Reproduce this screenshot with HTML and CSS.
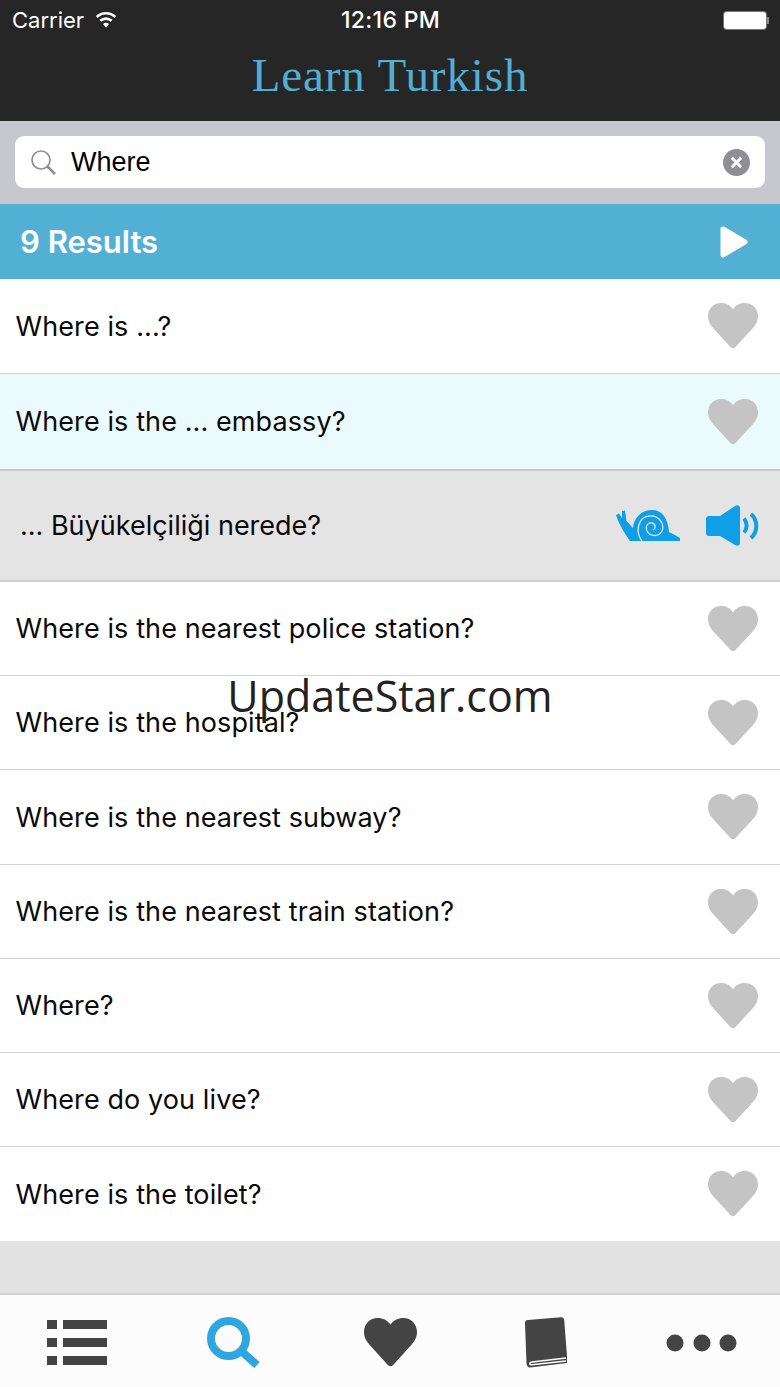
FILE: index.html
```html
<!DOCTYPE html>
<html lang="en">
<head>
  <meta charset="UTF-8">
  <title>Learn Turkish</title>
  <meta name="viewport" content="width=device-width, initial-scale=1">
  <link rel="stylesheet" href="styles.css">
</head>
<body>
  <svg class="defs" width="0" height="0">
    <symbol id="heart" viewBox="0 0 50 48" preserveAspectRatio="none">
      <path d="M25 6.500 C22 2 17.500 0 13 0 C5.500 0 0 6 0 14 C0 19 2.500 23 5 26 L22.500 46 C24 47.700 26 47.700 27.500 46 L45 26 C47.500 23 50 19 50 14 C50 6 44.500 0 37 0 C32.500 0 28 2 25 6.500 Z"/>
    </symbol>
  </svg>

  <header class="topbar">
    <div class="status">
      <div class="status-left">
        <span>Carrier</span>
        <svg class="wifi" width="24" height="17" viewBox="0 0 24 17">
          <path d="M12 16.500 L9 13 A4.500 4.500 0 0 1 15 13 Z" fill="#fff"/>
          <path d="M6.300 9.800 A8.500 8.500 0 0 1 17.700 9.800 M2.700 6 A13.500 13.500 0 0 1 21.300 6" fill="none" stroke="#fff" stroke-width="2.600"/>
        </svg>
      </div>
      <div class="status-time">12:16 PM</div>
      <div class="battery"><div class="battery-body"></div><div class="battery-tip"></div></div>
    </div>
    <h1 class="title">Learn Turkish</h1>
  </header>

  <div class="searchbar">
    <div class="field">
      <svg class="lens" width="27" height="27" viewBox="0 0 27 27">
        <circle cx="11" cy="11" r="9" fill="none" stroke="#8e8e93" stroke-width="1.700"/>
        <path d="M17.500 17.500 L25 25" stroke="#8e8e93" stroke-width="2.600"/>
      </svg>
      <span class="query">Where</span>
      <svg class="clear" width="27" height="27" viewBox="0 0 27 27">
        <circle cx="13.500" cy="13.500" r="13.500" fill="#8e8e93"/>
        <path d="M8.800 8.800 L18.200 18.200 M18.200 8.800 L8.800 18.200" stroke="#fff" stroke-width="3"/>
      </svg>
    </div>
  </div>

  <div class="results">
    <span>9 Results</span>
    <svg width="28" height="32" viewBox="0 0 28 32">
      <path d="M3 3 L25 16 L3 29 Z" fill="#fff" stroke="#fff" stroke-width="5" stroke-linejoin="round"/>
    </svg>
  </div>

  <ul class="list">
    <li class="row row-first">Where is ...?<svg class="heart"><use href="#heart"/></svg></li>
    <li class="row row-open">Where is the ... embassy?<svg class="heart"><use href="#heart"/></svg></li>
    <li class="detail">
      <span>... Büyükelçiliği nerede?</span>
      <div class="detail-icons">
        <svg width="64" height="31" viewBox="0 0 64 31">
          <path fill="#0f9fe6" d="M0 5 L3 3.500 L6 8 L6 1 L9 0.500 L10.500 11 L17 18 C18 7 26 0 36 0 C46 0 52 8 53 22 L58 24.500 L64 28 L64 31 L14 31 C9 24 3 14 0 5 Z"/>
          <path fill="none" stroke="#e4e4e4" stroke-width="1.300" d="M26 31 C19 22 22 7 33 6 C43 5 49 14 46 21 C43 27 34 27 31 21 C29 16 32 12 36 13 C40 14 40 19 37 20"/>
        </svg>
        <svg width="54" height="41" viewBox="0 0 54 41">
          <path fill="#0f9fe6" d="M3 11 L14 11 L29 1 C31 -0.300 34 0 34 3 L34 38 C34 41 31 41.300 29 40 L14 31 L3 31 C1 31 0 30 0 28 L0 14 C0 12 1 11 3 11 Z"/>
          <path fill="none" stroke="#0f9fe6" stroke-width="4" d="M38 13.500 C41.500 17.500 41.500 23.500 38 27.500"/>
          <path fill="none" stroke="#0f9fe6" stroke-width="4" d="M45 9 C52 15 52 27 45 33"/>
        </svg>
      </div>
    </li>
    <li class="row">Where is the nearest police station?<svg class="heart"><use href="#heart"/></svg></li>
    <li class="row">Where is the hospital?<svg class="heart"><use href="#heart"/></svg></li>
    <li class="row row-tall">Where is the nearest subway?<svg class="heart"><use href="#heart"/></svg></li>
    <li class="row">Where is the nearest train station?<svg class="heart"><use href="#heart"/></svg></li>
    <li class="row">Where?<svg class="heart"><use href="#heart"/></svg></li>
    <li class="row">Where do you live?<svg class="heart"><use href="#heart"/></svg></li>
    <li class="row row-last">Where is the toilet?<svg class="heart"><use href="#heart"/></svg></li>
  </ul>

  <div class="spacer"></div>

  <nav class="tabs">
    <svg class="tab-list" width="60" height="45" viewBox="0 0 60 45" fill="#444">
      <rect x="0" y="0" width="10" height="9"/><rect x="16" y="0" width="44" height="9"/>
      <rect x="0" y="18" width="10" height="9"/><rect x="16" y="18" width="44" height="9"/>
      <rect x="0" y="36" width="10" height="9"/><rect x="16" y="36" width="44" height="9"/>
    </svg>
    <svg width="54" height="51" viewBox="0 0 54 51">
      <circle cx="21.500" cy="21.500" r="17.500" fill="none" stroke="#2ea7df" stroke-width="8"/>
      <path d="M33 33 L50 48" stroke="#2ea7df" stroke-width="8"/>
    </svg>
    <svg class="tab-heart" width="53" height="49"><use href="#heart"/></svg>
    <svg width="42" height="51" viewBox="0 0 42 51">
      <path fill="#444" d="M3 3 L36 0.300 C38 0.200 39 1.500 39.200 3 L42 39 L42 46 L5 50.500 C2.500 50.500 1.500 48 1.500 46 L0 6 C0 4 1 3 3 3 Z"/>
      <path fill="none" stroke="#fff" stroke-width="1.500" d="M41 41 L7 45 C4 45.500 4 48 7 47.800 L41 44"/>
    </svg>
    <svg width="72" height="18" viewBox="0 0 72 18" fill="#444">
      <circle cx="9" cy="9" r="8.500"/><circle cx="36" cy="9" r="8.500"/><circle cx="62" cy="9" r="8.500"/>
    </svg>
  </nav>

  <div class="watermark">UpdateStar.com</div>
</body>
</html>
```

FILE: styles.css
```css
* {
  box-sizing: border-box;
}
html, body {
  margin: 0;
  padding: 0;
}
body {
  position: relative;
  width: 780px;
  height: 1387px;
  overflow: hidden;
  font-family: Inter, "Liberation Sans", sans-serif;
  background-color: #e2e2e2;
  color: #0a0a0a;
}
.defs {
  position: absolute;
}

/* top bar */
.topbar {
  height: 121px;
  background-color: #262626;
  color: #fff;
}
.status {
  display: grid;
  grid-template-columns: 1fr auto 1fr;
  align-items: center;
  height: 40px;
  padding: 0 11px 0 12px;
  font-size: 22px;
}
.status-left {
  display: flex;
  align-items: center;
  gap: 10px;
}
.wifi {
  margin-top: -1px;
}
.status-time {
  font-size: 23px;
  font-weight: 500;
  letter-spacing: 0.3px;
}
.battery {
  display: flex;
  align-items: center;
  justify-self: end;
}
.battery-body {
  width: 42px;
  height: 17px;
  background-color: #fff;
  border-radius: 3px;
  box-shadow: 0 0 0 1px #777;
}
.battery-tip {
  width: 2px;
  height: 7px;
  background-color: #888;
  margin-left: 1px;
}
.title {
  margin: 9px 0 0;
  text-align: center;
  font-family: "Liberation Serif", serif;
  font-weight: normal;
  font-size: 47px;
  line-height: 52px;
  letter-spacing: 0.9px;
  color: #53aed3;
}

/* search */
.searchbar {
  height: 83px;
  padding: 15px;
  background-color: #c7c8cd;
}
.field {
  display: flex;
  align-items: center;
  height: 52px;
  padding: 0 15px;
  background-color: #fff;
  border-radius: 9px;
}
.query {
  flex: 1;
  margin-left: 14px;
  font-family: "Liberation Sans", sans-serif;
  font-size: 27px;
  color: #000;
}

/* results header */
.results {
  display: flex;
  align-items: center;
  justify-content: space-between;
  height: 75px;
  padding: 0 32px 0 20px;
  background-color: #53b0d5;
  color: #fff;
  font-size: 31px;
  font-weight: 600;
}

/* phrase list */
.list {
  margin: 0;
  padding: 0;
  list-style: none;
}
.row {
  display: flex;
  align-items: center;
  justify-content: space-between;
  height: 94px;
  padding: 0 22px 0 15.500px;
  background-color: #fff;
  border-bottom: 1px solid #d4d4d4;
  font-size: 27px;
  letter-spacing: 0.1px;
}
.row-first,
.row-tall {
  height: 95px;
}
.row-open {
  height: 97px;
  background-color: #ebfafd;
  border-bottom: 2px solid #c9c9c9;
}
.row-last {
  border-bottom: none;
}
.heart {
  width: 50px;
  height: 46px;
  fill: #c4c4c4;
}
.detail {
  display: flex;
  align-items: center;
  justify-content: space-between;
  height: 111px;
  padding: 0 20px;
  background-color: #e4e4e4;
  border-bottom: 2px solid #d0d0d0;
  font-size: 27px;
}
.detail-icons {
  display: flex;
  align-items: center;
  gap: 26px;
}
.spacer {
  height: 54px;
  background-color: #e2e2e2;
  border-bottom: 2px solid #d0d0d0;
}

/* tab bar */
.tabs {
  display: grid;
  grid-template-columns: repeat(5, 156px);
  justify-items: center;
  align-items: center;
  height: 92px;
  padding-top: 3px;
  background-color: #fcfcfc;
}
.tab-list {
  margin-right: 2px;
}
.tab-heart {
  fill: #444;
}

.watermark {
  position: absolute;
  left: 0;
  right: 0;
  top: 666px;
  text-align: center;
  font-family: "Open Sans", sans-serif;
  font-size: 43px;
  line-height: 60px;
  color: #222;
}
```
